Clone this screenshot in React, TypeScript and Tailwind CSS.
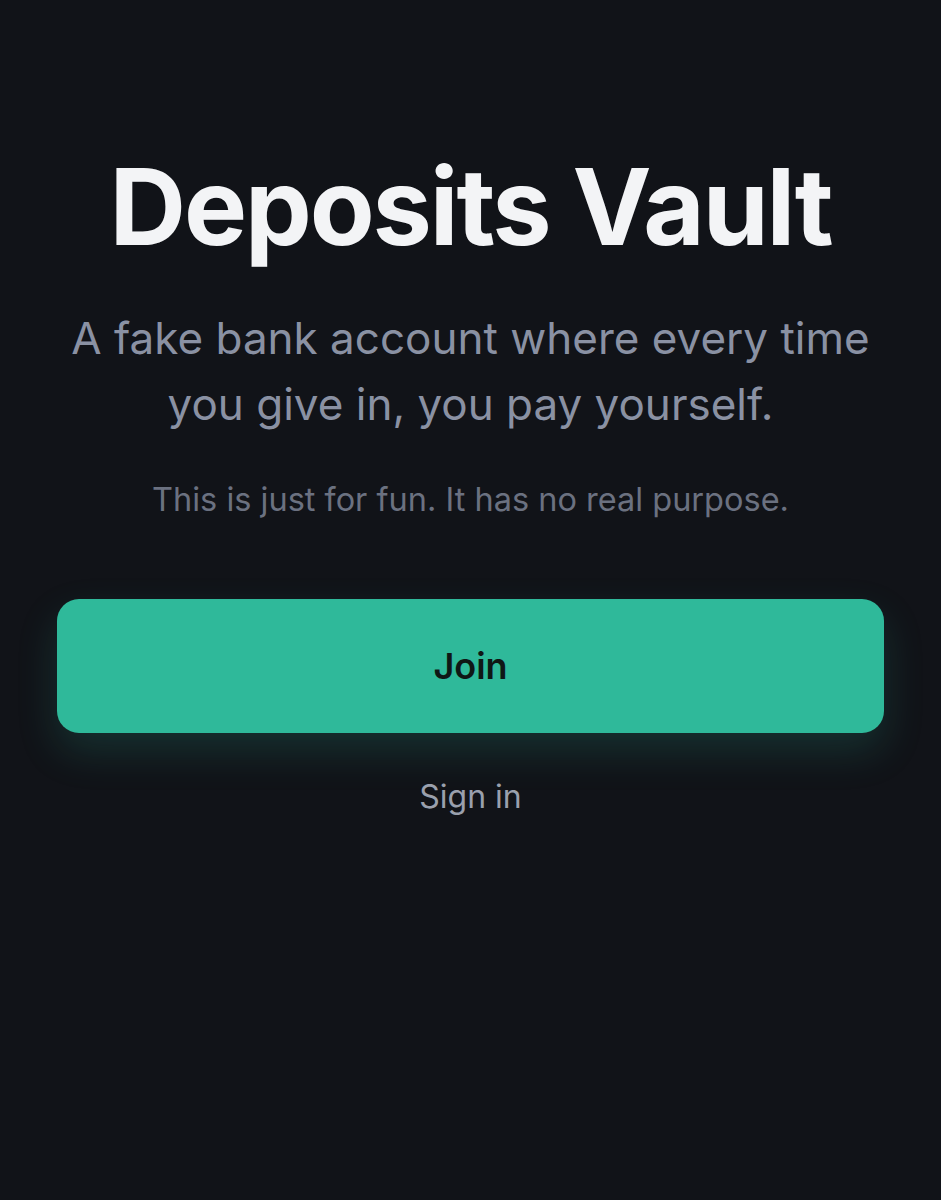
import React from "react";

export default function App() {
  return (
    <div className="min-h-[1200px] w-full bg-[#111318] flex flex-col items-center px-[57px]" style={{ fontFamily: "Inter, 'Noto Sans', sans-serif" }}>
      <h1 className="mt-[132px] text-[106px] leading-[150px] font-bold tracking-[-0.02em] text-[#f3f4f6]">Deposits Vault</h1>
      <p className="mt-[23px] text-[44px] leading-[66px] font-normal text-[#8a91a3] text-center max-w-[820px]">
        A fake bank account where every time you give in, you pay yourself.
      </p>
      <p className="mt-[39px] text-[32.5px] leading-[48px] text-[#6b7180] text-center">This is just for fun. It has no real purpose.</p>
      <button className="mt-[75px] w-full h-[134px] rounded-[22px] bg-[#2fb99a] text-[36px] font-semibold text-[#0f1715] shadow-[0_18px_40px_rgba(47,185,154,0.18)]">
        Join
      </button>
      <button className="mt-[42px] text-[32px] leading-[44px] text-[#9aa0ad]">Sign in</button>
    </div>
  );
}
